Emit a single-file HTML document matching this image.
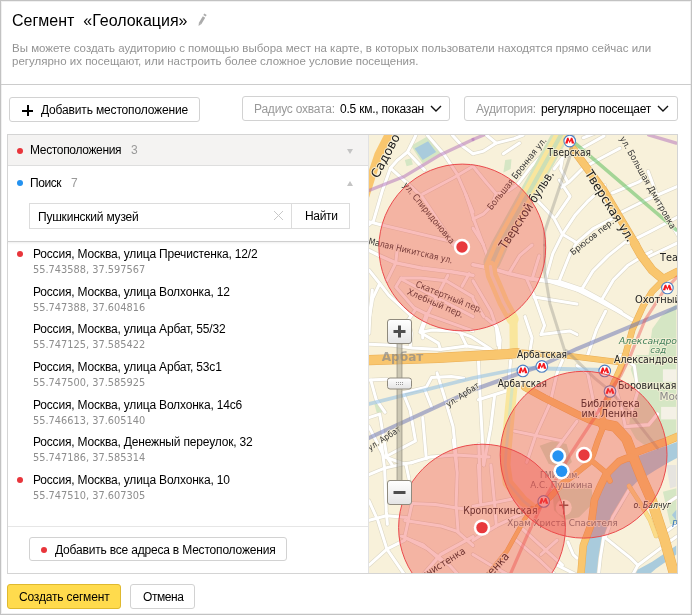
<!DOCTYPE html>
<html lang="ru">
<head>
<meta charset="utf-8">
<title>Сегмент «Геолокация»</title>
<style>
*{box-sizing:border-box;margin:0;padding:0}
html,body{width:692px;height:615px;overflow:hidden;background:#fff}
body{font-family:"Liberation Sans",Arial,sans-serif;font-size:12px;color:#000;position:relative}
.frame{position:absolute;left:0;top:0;width:692px;height:615px;border:1px solid #c2c2c2;box-shadow:inset 0 0 0 1px rgba(0,0,0,.06)}
.t{position:absolute;white-space:pre;line-height:14px;height:14px;will-change:transform}
.g{color:#999}
.title{left:12px;top:11px;font-size:16px;line-height:20px;height:20px}
.pencil{position:absolute;left:196px;top:12px}
.desc{position:absolute;left:12px;top:42px;width:670px;font-size:11.5px;line-height:13px;color:#939393;white-space:pre;will-change:transform}
.hr{position:absolute;left:1px;right:1px;top:84px;height:1px;background:#ccc}
.btn{position:absolute;height:25px;border:1px solid #d2d2d2;border-radius:3px;background:#fff}
.b1{left:9px;top:97px;width:191px}
.plus{position:absolute;left:12px;top:7px;width:11px;height:11px}
.plus:before{content:"";position:absolute;left:0;top:4.5px;width:11px;height:2px;background:#000}
.plus:after{content:"";position:absolute;left:4.5px;top:0;width:2px;height:11px;background:#000}
.b2{left:242px;top:96px;width:208px}
.b3{left:464px;top:96px;width:214px}
.chev{position:absolute}
.panel{position:absolute;left:7px;top:134px;width:671px;height:440px;border:1px solid #d4d4d4;background:#fff}
.hdr{position:absolute;left:8px;top:135px;width:360px;height:31px;background:#f4f3f2;border-bottom:1px solid #dedede}
.vline{position:absolute;left:368px;top:135px;width:1px;height:438px;background:#e2e2e2}
.dot{position:absolute;width:6px;height:6px;border-radius:50%;background:#e8353b}
.dot.blue{background:#2492f0}
.tri{position:absolute;width:0;height:0;border-left:3px solid transparent;border-right:3px solid transparent}
.inp{position:absolute;left:29px;top:203px;width:263px;height:26px;border:1px solid #dcdcdc}
.find{position:absolute;left:291px;top:203px;width:59px;height:26px;border:1px solid #dcdcdc;background:#fff}
.x{position:absolute;left:273px;top:210px}
.sep{position:absolute;left:8px;top:241px;width:360px;height:1px;background:#cfcfcf;box-shadow:0 1px 2px rgba(0,0,0,.10)}
.c{font-family:"DejaVu Sans","Liberation Sans",sans-serif;font-size:9.8px;color:#8d8d8d}
.sep2{position:absolute;left:8px;top:526px;width:360px;height:1px;background:#e6e6e6}
.addall{left:29px;top:537px;width:258px;height:24px}
.map{position:absolute;left:369px;top:135px;width:308px;height:438px;overflow:hidden;background:#f7f0d8;will-change:transform}
.ok{left:7px;top:584px;width:114px;background:#ffdb4d;border-color:#dfb92f}
.cancel{left:130px;top:584px;width:65px}
#b1t{letter-spacing:-0.158px}
#b2g{letter-spacing:-0.214px}
#b2t{letter-spacing:-0.222px}
#b3g{letter-spacing:-0.267px}
#b3t{letter-spacing:-0.247px}
#h1{letter-spacing:-0.336px}
#h2{letter-spacing:-0.453px}
#inpt{letter-spacing:-0.216px}
#findt{letter-spacing:-0.35px}
#addt{letter-spacing:-0.189px}
#okt{letter-spacing:-0.17px}
#cat{letter-spacing:-0.427px}
.a{letter-spacing:-0.178px}
</style>
</head>
<body>
<div class="frame"></div>
<div class="t title" id="title">Сегмент  «Геолокация»</div>
<svg class="pencil" width="12" height="16" viewBox="0 0 12 16"><path d="M8.0 5.0 L4.1 11.4" stroke="#ababab" stroke-width="2.8" fill="none"/><path d="M9.5 2.2 L8.5 3.8" stroke="#ababab" stroke-width="2.8" fill="none"/><path d="M2.9 10.7 L5.3 12.1 L2.6 14 Z" fill="#ababab"/></svg>
<div class="desc"><span id="d1">Вы можете создать аудиторию с помощью выбора мест на карте, в которых пользователи находятся прямо сейчас или</span>
<span id="d2">регулярно их посещают, или настроить более сложное условие посещения.</span></div>
<div class="hr"></div>

<div class="btn b1"><span class="plus"></span></div>
<div class="t" id="b1t" style="left:41px;top:103px">Добавить местоположение</div>
<div class="btn b2"></div>
<div class="t g" id="b2g" style="left:253.5px;top:102px">Радиус охвата:</div>
<div class="t" id="b2t" style="left:340px;top:102px">0.5 км., показан</div>
<svg class="chev" style="left:430px;top:105px" width="12" height="8" viewBox="0 0 12 8"><path d="M1 1 L6 6 L11 1" fill="none" stroke="#111" stroke-width="1.4"/></svg>
<div class="btn b3"></div>
<div class="t g" id="b3g" style="left:476px;top:102px">Аудитория:</div>
<div class="t" id="b3t" style="left:541px;top:102px">регулярно посещает</div>
<svg class="chev" style="left:657px;top:105px" width="12" height="8" viewBox="0 0 12 8"><path d="M1 1 L6 6 L11 1" fill="none" stroke="#111" stroke-width="1.4"/></svg>

<div class="panel"></div>
<div class="hdr"></div>
<span class="dot" style="left:17px;top:148px"></span>
<div class="t" id="h1" style="left:30px;top:143px">Местоположения</div>
<div class="t g" id="h1c" style="left:131px;top:143px">3</div>
<span class="tri" style="left:347px;top:149px;border-top:5px solid #c4c4c4"></span>
<span class="dot blue" style="left:17px;top:180px"></span>
<div class="t" id="h2" style="left:30px;top:176px">Поиск</div>
<div class="t g" id="h2c" style="left:70.5px;top:176px">7</div>
<span class="tri" style="left:347px;top:181px;border-bottom:5px solid #c4c4c4"></span>
<div class="inp"></div>
<div class="t" id="inpt" style="left:37.5px;top:210px">Пушкинский музей</div>
<svg class="x" width="11" height="11" viewBox="0 0 11 11"><path d="M1 1 L10 10 M10 1 L1 10" stroke="#c8c8c8" stroke-width="1" fill="none"/></svg>
<div class="find"></div>
<div class="t" id="findt" style="left:304.5px;top:209px">Найти</div>
<div class="sep"></div>
<div class="t a" id="a0" style="left:33px;top:247px">Россия, Москва, улица Пречистенка, 12/2</div>
<div class="t c" id="c0" style="left:33px;top:263px">55.743588, 37.597567</div>
<span class="dot" style="left:17px;top:251px"></span>
<div class="t a" id="a1" style="left:33px;top:285px">Россия, Москва, улица Волхонка, 12</div>
<div class="t c" id="c1" style="left:33px;top:301px">55.747388, 37.604816</div>
<div class="t a" id="a2" style="left:33px;top:322px">Россия, Москва, улица Арбат, 55/32</div>
<div class="t c" id="c2" style="left:33px;top:338px">55.747125, 37.585422</div>
<div class="t a" id="a3" style="left:33px;top:360px">Россия, Москва, улица Арбат, 53с1</div>
<div class="t c" id="c3" style="left:33px;top:376px">55.747500, 37.585925</div>
<div class="t a" id="a4" style="left:33px;top:398px">Россия, Москва, улица Волхонка, 14с6</div>
<div class="t c" id="c4" style="left:33px;top:414px">55.746613, 37.605140</div>
<div class="t a" id="a5" style="left:33px;top:435px">Россия, Москва, Денежный переулок, 32</div>
<div class="t c" id="c5" style="left:33px;top:451px">55.747186, 37.585314</div>
<div class="t a" id="a6" style="left:33px;top:473px">Россия, Москва, улица Волхонка, 10</div>
<div class="t c" id="c6" style="left:33px;top:489px">55.747510, 37.607305</div>
<span class="dot" style="left:17px;top:477px"></span>

<div class="sep2"></div>
<div class="btn addall"></div>
<span class="dot" style="left:41px;top:547px"></span>
<div class="t" id="addt" style="left:54.5px;top:543px">Добавить все адреса в Местоположения</div>
<div class="vline"></div>
<div class="map">
<!--MAP-->
<svg width="308" height="438" viewBox="369 135 308 438" style="position:absolute;left:0;top:0;display:block">
<rect x="369" y="135" width="308" height="438" fill="#f8f1da"/>
<path d="M411.1 145.7 L428.1 135.9 L440.6 152.9 L422.7 163.6 Z" fill="#d5e6c4" />
<path d="M414.6 148.4 L428.1 141.3 L436.1 152.0 L422.7 160.1 Z" fill="#a9cbdc" />
<path d="M404.8 160.1 L411.1 158.3 L412.9 164.5 L406.6 166.3 Z" fill="#d5e6c4" />
<path d="M505.2 160.1 L511.5 159.2 L510.6 169.0 L503.4 172.6 Z" fill="#d5e6c4" />
<path d="M676.3 304.1 L661.1 316.6 L652.2 329.1 L648.6 355.1 L676.3 355.1 Z" fill="#d5e6c4" />
<path d="M636.1 355.0 L676.3 355.0 L676.3 439.1 L648.6 448.1 L636.1 439.1 L628.9 426.6 L630.7 414.1 L637.9 390.8 L630.7 369.3 Z" fill="#d5e6c4" />
<path d="M539.7 445.8 L552.2 441.3 L566.5 444 L571.9 461.9 L564.7 469 L548.6 463.7 Z" fill="#d2dfbc"/>
<path d="M552.2 488.7 L573.7 481.6 L591.6 488.7 L593.3 503 L579 517.3 L564.7 520 L554 510.2 Z" fill="#d2dfbc"/>
<path d="M662.9 369.3 L676.3 369.3 L676.3 381.8 L662.9 381.8 Z" fill="#f4f1e6" />
<path d="M661.1 406.9 L676.3 406.9 L676.3 419.4 L661.1 419.4 Z" fill="#f4f1e6" />
<path d="M662.9 491.8 L676.3 488.3 L676.3 524.1 L670.1 524.1 Z" fill="#d5e6c4" />
<path d="M666.5 465.0 L676.3 465.0 L676.3 486.5 L670.1 488.3 Z" fill="#e6e4df" />
<path d="M374.4 404.2 L379.7 402.4 L382.4 412.3 L377.1 414.1 Z" fill="#d5e6c4" />
<path d="M636 457 L651.5 451 L666 446 L677 442 L677 458 L667.6 463 L655 470.5 L644 477.5 Z" fill="#a9cbdc"/>
<path d="M633 458 L640 473 L638.3 480.2 L630.7 488.3 L621.7 506.2 L611 524 L603.8 536.6 L602 554.5 L600.3 575 L584 575 L586.5 545.5 L594.5 524 L597.5 500 L603 487 L609 475 L621 464 L628 461 Z" fill="#a9cbdc"/>
<path d="M636.1 570.6 L652.2 561.7 L676.3 545.5 L676.3 554.5 L655.8 568.8 L648.6 575.1 L636.1 575.1 Z" fill="#a9cbdc" />
<path d="M676.3 509.7 L671.9 515.1 L676.3 520.5 Z" fill="#a9cbdc" />
<path d="M369.0 224.5 L373.5 220.9 L382.4 190.5 L390.5 168.1 L397.6 160.1 L407.5 152.0 L412.9 141.3 L415.9 135.0" fill="none" stroke="#ddd8c6" stroke-width="4.2" stroke-linejoin="round" stroke-linecap="round" />
<path d="M390.5 168.1 L407.5 183.3 L422.7 197.6 L437.0 219.1 L447.8 235.2 L453.1 245.1" fill="none" stroke="#ddd8c6" stroke-width="4.2" stroke-linejoin="round" stroke-linecap="round" />
<path d="M407.5 152.0 L424.5 169.9" fill="none" stroke="#ddd8c6" stroke-width="4.2" stroke-linejoin="round" stroke-linecap="round" />
<path d="M427.2 135.0 L444.2 154.7 L456.7 173.5 L465.7 194.1 L473.0 212.0" fill="none" stroke="#ddd8c6" stroke-width="4.2" stroke-linejoin="round" stroke-linecap="round" />
<path d="M452.2 135.0 L462.1 145.7 L473.0 153.8" fill="none" stroke="#ddd8c6" stroke-width="4.2" stroke-linejoin="round" stroke-linecap="round" />
<path d="M422.7 194.1 L453.1 178.0 L473.0 166.3" fill="none" stroke="#ddd8c6" stroke-width="4.2" stroke-linejoin="round" stroke-linecap="round" />
<path d="M369.0 221.8 L379.7 224.5 L413.7 232.5 L447.8 240.6 L462.1 245.1" fill="none" stroke="#ddd8c6" stroke-width="4.2" stroke-linejoin="round" stroke-linecap="round" />
<path d="M473.0 153.8 L483.7 151.1 L496.3 143.1 L486.4 135.0" fill="none" stroke="#ddd8c6" stroke-width="4.2" stroke-linejoin="round" stroke-linecap="round" />
<path d="M496.3 143.1 L514.2 138.6 L523.1 135.0" fill="none" stroke="#ddd8c6" stroke-width="4.2" stroke-linejoin="round" stroke-linecap="round" />
<path d="M503.4 153.8 L519.5 143.1" fill="none" stroke="#ddd8c6" stroke-width="4.2" stroke-linejoin="round" stroke-linecap="round" />
<path d="M473.0 166.3 L485.5 181.5 L496.3 194.1" fill="none" stroke="#ddd8c6" stroke-width="4.2" stroke-linejoin="round" stroke-linecap="round" />
<path d="M473.0 219.1 L483.7 213.8 L490.9 206.6 L496.3 194.1 L508.8 190.5 L517.7 184.2 L532.1 165.4 L544.6 152.9" fill="none" stroke="#ddd8c6" stroke-width="4.2" stroke-linejoin="round" stroke-linecap="round" />
<path d="M473.0 228.1 L483.7 245.1" fill="none" stroke="#ddd8c6" stroke-width="4.2" stroke-linejoin="round" stroke-linecap="round" />
<path d="M577.0 289.7 L598.5 300.5 L618.2 311.2 L636.1 322.0" fill="none" stroke="#ddd8c6" stroke-width="4.8" stroke-linejoin="round" stroke-linecap="round" />
<path d="M605.6 311.2 L596.7 329.1 L587.7 355.1" fill="none" stroke="#ddd8c6" stroke-width="4.2" stroke-linejoin="round" stroke-linecap="round" />
<path d="M473.0 264.7 L490.9 268.3 L508.8 273.6 L532.1 279.0 L548.2 280.8 L577.0 289.7" fill="none" stroke="#ddd8c6" stroke-width="4.8" stroke-linejoin="round" stroke-linecap="round" />
<path d="M508.8 273.6 L519.5 255.7 L532.1 245.0" fill="none" stroke="#ddd8c6" stroke-width="4.2" stroke-linejoin="round" stroke-linecap="round" />
<path d="M532.1 279.0 L539.2 255.7" fill="none" stroke="#ddd8c6" stroke-width="4.2" stroke-linejoin="round" stroke-linecap="round" />
<path d="M526.7 279.0 L533.9 295.1 L544.6 325.5 L541.0 334.5" fill="none" stroke="#ddd8c6" stroke-width="4.2" stroke-linejoin="round" stroke-linecap="round" />
<path d="M533.9 296.9 L577.0 304.1" fill="none" stroke="#ddd8c6" stroke-width="4.2" stroke-linejoin="round" stroke-linecap="round" />
<path d="M541.0 334.5 L569.7 330.9 L577.0 334.5" fill="none" stroke="#ddd8c6" stroke-width="4.2" stroke-linejoin="round" stroke-linecap="round" />
<path d="M524.9 316.6 L532.1 338.1 L530.3 348.8" fill="none" stroke="#ddd8c6" stroke-width="4.2" stroke-linejoin="round" stroke-linecap="round" />
<path d="M473.0 280.8 L490.9 311.2 L496.3 327.3 L498.1 345.2" fill="none" stroke="#ddd8c6" stroke-width="4.2" stroke-linejoin="round" stroke-linecap="round" />
<path d="M473.0 298.7 L483.7 316.6" fill="none" stroke="#ddd8c6" stroke-width="4.2" stroke-linejoin="round" stroke-linecap="round" />
<path d="M369.0 250.4 L379.7 255.7 L395.8 262.9 L422.7 268.3 L451.3 271.8 L473.0 275.4" fill="none" stroke="#ddd8c6" stroke-width="4.6" stroke-linejoin="round" stroke-linecap="round" />
<path d="M397.6 245.0 L395.8 262.9 L386.9 280.8" fill="none" stroke="#ddd8c6" stroke-width="4.2" stroke-linejoin="round" stroke-linecap="round" />
<path d="M401.2 278.1 L420.9 278.1 L446.0 280.8 L473.0 296.9" fill="none" stroke="#ddd8c6" stroke-width="4.2" stroke-linejoin="round" stroke-linecap="round" />
<path d="M401.2 278.1 L395.8 287.1 L413.7 307.6 L428.1 314.8 L473.0 330.9" fill="none" stroke="#ddd8c6" stroke-width="4.2" stroke-linejoin="round" stroke-linecap="round" />
<path d="M401.2 279.0 L428.1 293.3 L473.0 316.6" fill="none" stroke="#ddd8c6" stroke-width="4.2" stroke-linejoin="round" stroke-linecap="round" />
<path d="M447.8 275.4 L428.1 313.0 L422.7 329.1 L422.7 338.1" fill="none" stroke="#ddd8c6" stroke-width="4.2" stroke-linejoin="round" stroke-linecap="round" />
<path d="M369.0 270.1 L379.7 283.5 L388.7 295.1 L410.2 314.8" fill="none" stroke="#ddd8c6" stroke-width="4.2" stroke-linejoin="round" stroke-linecap="round" />
<path d="M379.7 283.5 L372.6 298.7 L369.0 320.2" fill="none" stroke="#ddd8c6" stroke-width="4.2" stroke-linejoin="round" stroke-linecap="round" />
<path d="M469.2 273.6 L462.1 286.2" fill="none" stroke="#ddd8c6" stroke-width="4.2" stroke-linejoin="round" stroke-linecap="round" />
<path d="M369.0 380.1 L386.9 379.2" fill="none" stroke="#ddd8c6" stroke-width="4.2" stroke-linejoin="round" stroke-linecap="round" />
<path d="M370.8 380.1 L376.2 399.7 L385.1 412.3" fill="none" stroke="#ddd8c6" stroke-width="4.2" stroke-linejoin="round" stroke-linecap="round" />
<path d="M403.0 392.6 L426.3 387.2 L431.6 377.4 L451.3 376.5 L463.9 378.3" fill="none" stroke="#ddd8c6" stroke-width="4.2" stroke-linejoin="round" stroke-linecap="round" />
<path d="M403.0 392.6 L410.2 410.5 L415.5 440.9 L385.1 457.0" fill="none" stroke="#ddd8c6" stroke-width="4.2" stroke-linejoin="round" stroke-linecap="round" />
<path d="M369.0 417.6 L379.7 414.1 L386.9 457.0 L392.3 465.1" fill="none" stroke="#ddd8c6" stroke-width="4.2" stroke-linejoin="round" stroke-linecap="round" />
<path d="M424.5 389.0 L431.6 406.9" fill="none" stroke="#ddd8c6" stroke-width="4.2" stroke-linejoin="round" stroke-linecap="round" />
<path d="M422.7 417.6 L426.3 458.8" fill="none" stroke="#ddd8c6" stroke-width="4.2" stroke-linejoin="round" stroke-linecap="round" />
<path d="M437.0 372.9 L444.2 396.2 L453.1 426.6 L454.9 444.5 L456.7 465.1" fill="none" stroke="#ddd8c6" stroke-width="4.2" stroke-linejoin="round" stroke-linecap="round" />
<path d="M385.1 457.0 L404.8 464.2" fill="none" stroke="#ddd8c6" stroke-width="4.2" stroke-linejoin="round" stroke-linecap="round" />
<path d="M369.0 426.6 L383.3 455.2" fill="none" stroke="#ddd8c6" stroke-width="4.2" stroke-linejoin="round" stroke-linecap="round" />
<path d="M478.4 360.4 L480.2 399.7 L481.9 430.2 L483.7 465.1" fill="none" stroke="#ddd8c6" stroke-width="4.2" stroke-linejoin="round" stroke-linecap="round" />
<path d="M494.5 396.2 L490.9 426.6 L483.7 465.1" fill="none" stroke="#ddd8c6" stroke-width="4.2" stroke-linejoin="round" stroke-linecap="round" />
<path d="M478.4 399.7 L507.0 390.8" fill="none" stroke="#ddd8c6" stroke-width="4.2" stroke-linejoin="round" stroke-linecap="round" />
<path d="M510.6 360.4 L508.8 381.8" fill="none" stroke="#ddd8c6" stroke-width="4.2" stroke-linejoin="round" stroke-linecap="round" />
<path d="M562.5 360.4 L557.1 372.9 L550.0 403.3 L535.6 435.5 L526.7 462.4" fill="none" stroke="#ddd8c6" stroke-width="4.2" stroke-linejoin="round" stroke-linecap="round" />
<path d="M514.2 431.1 L535.6 435.5 L562.5 440.9" fill="none" stroke="#ddd8c6" stroke-width="4.2" stroke-linejoin="round" stroke-linecap="round" />
<path d="M577.0 421.2 L562.5 440.9 L557.1 448.1" fill="none" stroke="#ddd8c6" stroke-width="4.2" stroke-linejoin="round" stroke-linecap="round" />
<path d="M369.0 500.8 L377.9 520.5 L386.9 549.1 L369.0 565.2" fill="none" stroke="#ddd8c6" stroke-width="4.2" stroke-linejoin="round" stroke-linecap="round" />
<path d="M386.9 549.1 L404.8 540.2" fill="none" stroke="#ddd8c6" stroke-width="4.2" stroke-linejoin="round" stroke-linecap="round" />
<path d="M386.9 549.1 L404.8 575.1" fill="none" stroke="#ddd8c6" stroke-width="4.2" stroke-linejoin="round" stroke-linecap="round" />
<path d="M412.0 503.5 L435.2 504.4 L456.7 508.0 L473.0 509.7" fill="none" stroke="#ddd8c6" stroke-width="4.2" stroke-linejoin="round" stroke-linecap="round" />
<path d="M404.8 520.5 L440.6 525.9 L456.7 531.2 L473.0 545.5" fill="none" stroke="#ddd8c6" stroke-width="4.2" stroke-linejoin="round" stroke-linecap="round" />
<path d="M412.0 503.5 L404.8 536.6" fill="none" stroke="#ddd8c6" stroke-width="4.2" stroke-linejoin="round" stroke-linecap="round" />
<path d="M403.0 536.6 L428.1 549.1 L449.5 565.2 L458.5 575.1" fill="none" stroke="#ddd8c6" stroke-width="4.2" stroke-linejoin="round" stroke-linecap="round" />
<path d="M473.0 536.6 L440.6 554.5 L422.7 575.1" fill="none" stroke="#ddd8c6" stroke-width="4.4" stroke-linejoin="round" stroke-linecap="round" />
<path d="M545.2 280.8 L552.8 253.7 L562.5 234.2 L575.5 214.7 L587.4 201.7 L599.4 190.8 L604.8 185.4" fill="none" stroke="#ddd8c6" stroke-width="4.2" stroke-linejoin="round" stroke-linecap="round" />
<path d="M559.3 280.8 L570.1 253.7 L576.6 242.9 L592.9 228.8 L615.6 216.9" fill="none" stroke="#ddd8c6" stroke-width="4.2" stroke-linejoin="round" stroke-linecap="round" />
<path d="M580.9 290.6 L592.9 271.0 L608.0 255.9 L625.4 241.8" fill="none" stroke="#ddd8c6" stroke-width="4.2" stroke-linejoin="round" stroke-linecap="round" />
<path d="M601.5 300.1 L613.5 279.7 L627.6 265.6 L644.9 254.8 L651.4 251.5" fill="none" stroke="#ddd8c6" stroke-width="4.2" stroke-linejoin="round" stroke-linecap="round" />
<path d="M534.3 197.3 L553.8 217.9 L562.5 234.2 L573.4 240.7 L576.6 242.9" fill="none" stroke="#ddd8c6" stroke-width="4.2" stroke-linejoin="round" stroke-linecap="round" />
<path d="M559.3 180.0 L570.1 196.3 L556.0 216.9" fill="none" stroke="#ddd8c6" stroke-width="4.2" stroke-linejoin="round" stroke-linecap="round" />
<path d="M627.6 242.9 L651.4 230.9 L680.0 215.8" fill="none" stroke="#ddd8c6" stroke-width="4.2" stroke-linejoin="round" stroke-linecap="round" />
<path d="M648.1 257.0 L680.0 241.8" fill="none" stroke="#ddd8c6" stroke-width="4.2" stroke-linejoin="round" stroke-linecap="round" />
<path d="M621.0 212.5 L647.1 199.5 L680.0 185.4" fill="none" stroke="#ddd8c6" stroke-width="4.2" stroke-linejoin="round" stroke-linecap="round" />
<path d="M612.4 193.0 L638.4 182.2 L644.9 177.8" fill="none" stroke="#ddd8c6" stroke-width="4.2" stroke-linejoin="round" stroke-linecap="round" />
<path d="M648.1 171.3 L660.1 203.8 L670.9 223.4 L680.0 238.5" fill="none" stroke="#ddd8c6" stroke-width="4.2" stroke-linejoin="round" stroke-linecap="round" />
<path d="M530.0 278.6 L545.2 280.8 L559.3 281.9 L582.0 289.5 L601.5 300.1 L621.0 312.2" fill="none" stroke="#ddd8c6" stroke-width="5.0" stroke-linejoin="round" stroke-linecap="round" />
<path d="M554.1 169.0 L562.5 158.0 L582.0 148.2 L604.1 135.9" fill="none" stroke="#ddd8c6" stroke-width="4.2" stroke-linejoin="round" stroke-linecap="round" />
<path d="M561.2 187.2 L569.0 182.0 L583.3 167.7 L602.8 157.3 L620.0 148.2" fill="none" stroke="#ddd8c6" stroke-width="4.2" stroke-linejoin="round" stroke-linecap="round" />
<path d="M562.5 158.0 L560.6 169.0 L567.7 182.0" fill="none" stroke="#ddd8c6" stroke-width="4.2" stroke-linejoin="round" stroke-linecap="round" />
<path d="M583.3 137.8 L602.8 130.0" fill="none" stroke="#ddd8c6" stroke-width="4.2" stroke-linejoin="round" stroke-linecap="round" />
<path d="M369.0 344.2 L392.8 345.3 L412.4 348.1 L440.5 349.6 L466.6 345.9 L490.4 349.6 L499.1 352.9" fill="none" stroke="#ddd8c6" stroke-width="4.2" stroke-linejoin="round" stroke-linecap="round" />
<path d="M415.6 309.5 L408.0 320.3 L411.3 333.4 L410.2 347.4" fill="none" stroke="#ddd8c6" stroke-width="4.2" stroke-linejoin="round" stroke-linecap="round" />
<path d="M426.4 313.8 L419.9 332.3 L438.4 343.1 L440.5 349.6" fill="none" stroke="#ddd8c6" stroke-width="4.2" stroke-linejoin="round" stroke-linecap="round" />
<path d="M421.0 332.3 L431.9 330.1 L455.7 331.2 L470.9 336.6 L490.4 349.0" fill="none" stroke="#ddd8c6" stroke-width="4.2" stroke-linejoin="round" stroke-linecap="round" />
<path d="M486.1 318.2 L496.9 326.9 L500.2 339.9 L499.1 352.9" fill="none" stroke="#ddd8c6" stroke-width="4.2" stroke-linejoin="round" stroke-linecap="round" />
<path d="M460.0 332.3 L466.6 345.9" fill="none" stroke="#ddd8c6" stroke-width="4.2" stroke-linejoin="round" stroke-linecap="round" />
<path d="M372.3 290.0 L370.1 311.7 L369.0 333.4" fill="none" stroke="#ddd8c6" stroke-width="4.2" stroke-linejoin="round" stroke-linecap="round" />
<path d="M411.2 462.7 L430.6 456.9 L455.5 455.1 L489.0 456.9" fill="none" stroke="#ddd8c6" stroke-width="4.2" stroke-linejoin="round" stroke-linecap="round" />
<path d="M453.3 440.0 L457.2 472.4 L456.1 504.9 L458.1 531.9" fill="none" stroke="#ddd8c6" stroke-width="4.2" stroke-linejoin="round" stroke-linecap="round" />
<path d="M478.8 444.3 L480.6 502.7" fill="none" stroke="#ddd8c6" stroke-width="4.2" stroke-linejoin="round" stroke-linecap="round" />
<path d="M401.4 536.2 L423.1 544.9 L441.4 561.1" fill="none" stroke="#ddd8c6" stroke-width="4.2" stroke-linejoin="round" stroke-linecap="round" />
<path d="M380.9 440.0 L384.6 468.1 L386.3 511.4 L387.4 524.3" fill="none" stroke="#ddd8c6" stroke-width="4.2" stroke-linejoin="round" stroke-linecap="round" />
<path d="M369.0 474.6 L384.6 468.1 L405.8 463.4 L412.2 462.7" fill="none" stroke="#ddd8c6" stroke-width="4.2" stroke-linejoin="round" stroke-linecap="round" />
<path d="M405.8 463.8 L409.0 478.9" fill="none" stroke="#ddd8c6" stroke-width="4.2" stroke-linejoin="round" stroke-linecap="round" />
<path d="M369.0 520.4 L386.3 515.7 L406.8 517.4" fill="none" stroke="#ddd8c6" stroke-width="4.2" stroke-linejoin="round" stroke-linecap="round" />
<path d="M465.6 194.0 L470.0 207.0 L473.8 219.5 L480.0 236.0 L487.0 255.0 L490.0 264.0" fill="none" stroke="#ddd8c6" stroke-width="4.2" stroke-linejoin="round" stroke-linecap="round" />
<path d="M473.0 540.2 L496.3 525.9 L526.7 511.5 L533.9 507.1" fill="none" stroke="#ddd8c6" stroke-width="4.4" stroke-linejoin="round" stroke-linecap="round" />
<path d="M473.0 506.2 L494.5 502.6 L512.4 499.0" fill="none" stroke="#ddd8c6" stroke-width="4.2" stroke-linejoin="round" stroke-linecap="round" />
<path d="M478.4 465.0 L480.2 500.8" fill="none" stroke="#ddd8c6" stroke-width="4.2" stroke-linejoin="round" stroke-linecap="round" />
<path d="M490.9 465.0 L494.5 502.6 L496.3 525.9" fill="none" stroke="#ddd8c6" stroke-width="4.2" stroke-linejoin="round" stroke-linecap="round" />
<path d="M523.1 529.4 L544.6 549.1 L562.5 565.2" fill="none" stroke="#ddd8c6" stroke-width="4.2" stroke-linejoin="round" stroke-linecap="round" />
<path d="M516.0 540.2 L539.2 559.9 L555.3 575.1" fill="none" stroke="#ddd8c6" stroke-width="4.2" stroke-linejoin="round" stroke-linecap="round" />
<path d="M541.0 554.5 L557.1 540.2" fill="none" stroke="#ddd8c6" stroke-width="4.2" stroke-linejoin="round" stroke-linecap="round" />
<path d="M473.0 554.5 L490.9 565.2 L508.8 575.1" fill="none" stroke="#ddd8c6" stroke-width="4.2" stroke-linejoin="round" stroke-linecap="round" />
<path d="M567.9 542.0 L573.2 554.5 L577.0 558.1" fill="none" stroke="#ddd8c6" stroke-width="4.2" stroke-linejoin="round" stroke-linecap="round" />
<path d="M557.1 565.2 L577.0 575.1" fill="none" stroke="#ddd8c6" stroke-width="4.2" stroke-linejoin="round" stroke-linecap="round" />
<path d="M628.9 490.1 L612.8 516.9 L605.6 536.6" fill="none" stroke="#ddd8c6" stroke-width="4.2" stroke-linejoin="round" stroke-linecap="round" />
<path d="M603.8 536.6 L630.7 558.1 L637.9 565.2 L632.5 575.1" fill="none" stroke="#ddd8c6" stroke-width="4.2" stroke-linejoin="round" stroke-linecap="round" />
<path d="M603.8 536.6 L600.3 558.1 L598.5 575.1" fill="none" stroke="#ddd8c6" stroke-width="4.2" stroke-linejoin="round" stroke-linecap="round" />
<path d="M637.9 565.2 L659.3 549.1 L676.3 536.6" fill="none" stroke="#ddd8c6" stroke-width="4.2" stroke-linejoin="round" stroke-linecap="round" />
<path d="M659.3 536.6 L655.8 524.1" fill="none" stroke="#ddd8c6" stroke-width="4.2" stroke-linejoin="round" stroke-linecap="round" />
<path d="M676.3 497.2 L662.9 506.2" fill="none" stroke="#ddd8c6" stroke-width="4.2" stroke-linejoin="round" stroke-linecap="round" />
<path d="M676.3 524.1 L666.5 531.2" fill="none" stroke="#ddd8c6" stroke-width="4.2" stroke-linejoin="round" stroke-linecap="round" />
<path d="M587.7 372.9 L593.1 399.7 L598.5 414.1" fill="none" stroke="#ddd8c6" stroke-width="4.2" stroke-linejoin="round" stroke-linecap="round" />
<path d="M612.8 378.3 L621.7 408.7 L625.3 426.6" fill="none" stroke="#ddd8c6" stroke-width="4.2" stroke-linejoin="round" stroke-linecap="round" />
<path d="M625.3 426.6 L648.6 424.8 L657.5 414.1" fill="none" stroke="#ddd8c6" stroke-width="4.6" stroke-linejoin="round" stroke-linecap="round" />
<path d="M620.0 355.0 L634.3 365.7 L637.9 390.8 L630.7 414.1" fill="none" stroke="#ddd8c6" stroke-width="4.2" stroke-linejoin="round" stroke-linecap="round" />
<path d="M577.0 365.7 L587.7 372.9" fill="none" stroke="#ddd8c6" stroke-width="4.2" stroke-linejoin="round" stroke-linecap="round" />
<path d="M369.0 224.5 L373.5 220.9 L382.4 190.5 L390.5 168.1 L397.6 160.1 L407.5 152.0 L412.9 141.3 L415.9 135.0" fill="none" stroke="#ffffff" stroke-width="3.0" stroke-linejoin="round" stroke-linecap="round" />
<path d="M390.5 168.1 L407.5 183.3 L422.7 197.6 L437.0 219.1 L447.8 235.2 L453.1 245.1" fill="none" stroke="#ffffff" stroke-width="3.0" stroke-linejoin="round" stroke-linecap="round" />
<path d="M407.5 152.0 L424.5 169.9" fill="none" stroke="#ffffff" stroke-width="3.0" stroke-linejoin="round" stroke-linecap="round" />
<path d="M427.2 135.0 L444.2 154.7 L456.7 173.5 L465.7 194.1 L473.0 212.0" fill="none" stroke="#ffffff" stroke-width="3.0" stroke-linejoin="round" stroke-linecap="round" />
<path d="M452.2 135.0 L462.1 145.7 L473.0 153.8" fill="none" stroke="#ffffff" stroke-width="3.0" stroke-linejoin="round" stroke-linecap="round" />
<path d="M422.7 194.1 L453.1 178.0 L473.0 166.3" fill="none" stroke="#ffffff" stroke-width="3.0" stroke-linejoin="round" stroke-linecap="round" />
<path d="M369.0 221.8 L379.7 224.5 L413.7 232.5 L447.8 240.6 L462.1 245.1" fill="none" stroke="#ffffff" stroke-width="3.0" stroke-linejoin="round" stroke-linecap="round" />
<path d="M473.0 153.8 L483.7 151.1 L496.3 143.1 L486.4 135.0" fill="none" stroke="#ffffff" stroke-width="3.0" stroke-linejoin="round" stroke-linecap="round" />
<path d="M496.3 143.1 L514.2 138.6 L523.1 135.0" fill="none" stroke="#ffffff" stroke-width="3.0" stroke-linejoin="round" stroke-linecap="round" />
<path d="M503.4 153.8 L519.5 143.1" fill="none" stroke="#ffffff" stroke-width="3.0" stroke-linejoin="round" stroke-linecap="round" />
<path d="M473.0 166.3 L485.5 181.5 L496.3 194.1" fill="none" stroke="#ffffff" stroke-width="3.0" stroke-linejoin="round" stroke-linecap="round" />
<path d="M473.0 219.1 L483.7 213.8 L490.9 206.6 L496.3 194.1 L508.8 190.5 L517.7 184.2 L532.1 165.4 L544.6 152.9" fill="none" stroke="#ffffff" stroke-width="3.0" stroke-linejoin="round" stroke-linecap="round" />
<path d="M473.0 228.1 L483.7 245.1" fill="none" stroke="#ffffff" stroke-width="3.0" stroke-linejoin="round" stroke-linecap="round" />
<path d="M577.0 289.7 L598.5 300.5 L618.2 311.2 L636.1 322.0" fill="none" stroke="#ffffff" stroke-width="3.6" stroke-linejoin="round" stroke-linecap="round" />
<path d="M605.6 311.2 L596.7 329.1 L587.7 355.1" fill="none" stroke="#ffffff" stroke-width="3.0" stroke-linejoin="round" stroke-linecap="round" />
<path d="M473.0 264.7 L490.9 268.3 L508.8 273.6 L532.1 279.0 L548.2 280.8 L577.0 289.7" fill="none" stroke="#ffffff" stroke-width="3.6" stroke-linejoin="round" stroke-linecap="round" />
<path d="M508.8 273.6 L519.5 255.7 L532.1 245.0" fill="none" stroke="#ffffff" stroke-width="3.0" stroke-linejoin="round" stroke-linecap="round" />
<path d="M532.1 279.0 L539.2 255.7" fill="none" stroke="#ffffff" stroke-width="3.0" stroke-linejoin="round" stroke-linecap="round" />
<path d="M526.7 279.0 L533.9 295.1 L544.6 325.5 L541.0 334.5" fill="none" stroke="#ffffff" stroke-width="3.0" stroke-linejoin="round" stroke-linecap="round" />
<path d="M533.9 296.9 L577.0 304.1" fill="none" stroke="#ffffff" stroke-width="3.0" stroke-linejoin="round" stroke-linecap="round" />
<path d="M541.0 334.5 L569.7 330.9 L577.0 334.5" fill="none" stroke="#ffffff" stroke-width="3.0" stroke-linejoin="round" stroke-linecap="round" />
<path d="M524.9 316.6 L532.1 338.1 L530.3 348.8" fill="none" stroke="#ffffff" stroke-width="3.0" stroke-linejoin="round" stroke-linecap="round" />
<path d="M473.0 280.8 L490.9 311.2 L496.3 327.3 L498.1 345.2" fill="none" stroke="#ffffff" stroke-width="3.0" stroke-linejoin="round" stroke-linecap="round" />
<path d="M473.0 298.7 L483.7 316.6" fill="none" stroke="#ffffff" stroke-width="3.0" stroke-linejoin="round" stroke-linecap="round" />
<path d="M369.0 250.4 L379.7 255.7 L395.8 262.9 L422.7 268.3 L451.3 271.8 L473.0 275.4" fill="none" stroke="#ffffff" stroke-width="3.4" stroke-linejoin="round" stroke-linecap="round" />
<path d="M397.6 245.0 L395.8 262.9 L386.9 280.8" fill="none" stroke="#ffffff" stroke-width="3.0" stroke-linejoin="round" stroke-linecap="round" />
<path d="M401.2 278.1 L420.9 278.1 L446.0 280.8 L473.0 296.9" fill="none" stroke="#ffffff" stroke-width="3.0" stroke-linejoin="round" stroke-linecap="round" />
<path d="M401.2 278.1 L395.8 287.1 L413.7 307.6 L428.1 314.8 L473.0 330.9" fill="none" stroke="#ffffff" stroke-width="3.0" stroke-linejoin="round" stroke-linecap="round" />
<path d="M401.2 279.0 L428.1 293.3 L473.0 316.6" fill="none" stroke="#ffffff" stroke-width="3.0" stroke-linejoin="round" stroke-linecap="round" />
<path d="M447.8 275.4 L428.1 313.0 L422.7 329.1 L422.7 338.1" fill="none" stroke="#ffffff" stroke-width="3.0" stroke-linejoin="round" stroke-linecap="round" />
<path d="M369.0 270.1 L379.7 283.5 L388.7 295.1 L410.2 314.8" fill="none" stroke="#ffffff" stroke-width="3.0" stroke-linejoin="round" stroke-linecap="round" />
<path d="M379.7 283.5 L372.6 298.7 L369.0 320.2" fill="none" stroke="#ffffff" stroke-width="3.0" stroke-linejoin="round" stroke-linecap="round" />
<path d="M469.2 273.6 L462.1 286.2" fill="none" stroke="#ffffff" stroke-width="3.0" stroke-linejoin="round" stroke-linecap="round" />
<path d="M369.0 380.1 L386.9 379.2" fill="none" stroke="#ffffff" stroke-width="3.0" stroke-linejoin="round" stroke-linecap="round" />
<path d="M370.8 380.1 L376.2 399.7 L385.1 412.3" fill="none" stroke="#ffffff" stroke-width="3.0" stroke-linejoin="round" stroke-linecap="round" />
<path d="M403.0 392.6 L426.3 387.2 L431.6 377.4 L451.3 376.5 L463.9 378.3" fill="none" stroke="#ffffff" stroke-width="3.0" stroke-linejoin="round" stroke-linecap="round" />
<path d="M403.0 392.6 L410.2 410.5 L415.5 440.9 L385.1 457.0" fill="none" stroke="#ffffff" stroke-width="3.0" stroke-linejoin="round" stroke-linecap="round" />
<path d="M369.0 417.6 L379.7 414.1 L386.9 457.0 L392.3 465.1" fill="none" stroke="#ffffff" stroke-width="3.0" stroke-linejoin="round" stroke-linecap="round" />
<path d="M424.5 389.0 L431.6 406.9" fill="none" stroke="#ffffff" stroke-width="3.0" stroke-linejoin="round" stroke-linecap="round" />
<path d="M422.7 417.6 L426.3 458.8" fill="none" stroke="#ffffff" stroke-width="3.0" stroke-linejoin="round" stroke-linecap="round" />
<path d="M437.0 372.9 L444.2 396.2 L453.1 426.6 L454.9 444.5 L456.7 465.1" fill="none" stroke="#ffffff" stroke-width="3.0" stroke-linejoin="round" stroke-linecap="round" />
<path d="M385.1 457.0 L404.8 464.2" fill="none" stroke="#ffffff" stroke-width="3.0" stroke-linejoin="round" stroke-linecap="round" />
<path d="M369.0 426.6 L383.3 455.2" fill="none" stroke="#ffffff" stroke-width="3.0" stroke-linejoin="round" stroke-linecap="round" />
<path d="M478.4 360.4 L480.2 399.7 L481.9 430.2 L483.7 465.1" fill="none" stroke="#ffffff" stroke-width="3.0" stroke-linejoin="round" stroke-linecap="round" />
<path d="M494.5 396.2 L490.9 426.6 L483.7 465.1" fill="none" stroke="#ffffff" stroke-width="3.0" stroke-linejoin="round" stroke-linecap="round" />
<path d="M478.4 399.7 L507.0 390.8" fill="none" stroke="#ffffff" stroke-width="3.0" stroke-linejoin="round" stroke-linecap="round" />
<path d="M510.6 360.4 L508.8 381.8" fill="none" stroke="#ffffff" stroke-width="3.0" stroke-linejoin="round" stroke-linecap="round" />
<path d="M562.5 360.4 L557.1 372.9 L550.0 403.3 L535.6 435.5 L526.7 462.4" fill="none" stroke="#ffffff" stroke-width="3.0" stroke-linejoin="round" stroke-linecap="round" />
<path d="M514.2 431.1 L535.6 435.5 L562.5 440.9" fill="none" stroke="#ffffff" stroke-width="3.0" stroke-linejoin="round" stroke-linecap="round" />
<path d="M577.0 421.2 L562.5 440.9 L557.1 448.1" fill="none" stroke="#ffffff" stroke-width="3.0" stroke-linejoin="round" stroke-linecap="round" />
<path d="M369.0 500.8 L377.9 520.5 L386.9 549.1 L369.0 565.2" fill="none" stroke="#ffffff" stroke-width="3.0" stroke-linejoin="round" stroke-linecap="round" />
<path d="M386.9 549.1 L404.8 540.2" fill="none" stroke="#ffffff" stroke-width="3.0" stroke-linejoin="round" stroke-linecap="round" />
<path d="M386.9 549.1 L404.8 575.1" fill="none" stroke="#ffffff" stroke-width="3.0" stroke-linejoin="round" stroke-linecap="round" />
<path d="M412.0 503.5 L435.2 504.4 L456.7 508.0 L473.0 509.7" fill="none" stroke="#ffffff" stroke-width="3.0" stroke-linejoin="round" stroke-linecap="round" />
<path d="M404.8 520.5 L440.6 525.9 L456.7 531.2 L473.0 545.5" fill="none" stroke="#ffffff" stroke-width="3.0" stroke-linejoin="round" stroke-linecap="round" />
<path d="M412.0 503.5 L404.8 536.6" fill="none" stroke="#ffffff" stroke-width="3.0" stroke-linejoin="round" stroke-linecap="round" />
<path d="M403.0 536.6 L428.1 549.1 L449.5 565.2 L458.5 575.1" fill="none" stroke="#ffffff" stroke-width="3.0" stroke-linejoin="round" stroke-linecap="round" />
<path d="M473.0 536.6 L440.6 554.5 L422.7 575.1" fill="none" stroke="#ffffff" stroke-width="3.2" stroke-linejoin="round" stroke-linecap="round" />
<path d="M545.2 280.8 L552.8 253.7 L562.5 234.2 L575.5 214.7 L587.4 201.7 L599.4 190.8 L604.8 185.4" fill="none" stroke="#ffffff" stroke-width="3.0" stroke-linejoin="round" stroke-linecap="round" />
<path d="M559.3 280.8 L570.1 253.7 L576.6 242.9 L592.9 228.8 L615.6 216.9" fill="none" stroke="#ffffff" stroke-width="3.0" stroke-linejoin="round" stroke-linecap="round" />
<path d="M580.9 290.6 L592.9 271.0 L608.0 255.9 L625.4 241.8" fill="none" stroke="#ffffff" stroke-width="3.0" stroke-linejoin="round" stroke-linecap="round" />
<path d="M601.5 300.1 L613.5 279.7 L627.6 265.6 L644.9 254.8 L651.4 251.5" fill="none" stroke="#ffffff" stroke-width="3.0" stroke-linejoin="round" stroke-linecap="round" />
<path d="M534.3 197.3 L553.8 217.9 L562.5 234.2 L573.4 240.7 L576.6 242.9" fill="none" stroke="#ffffff" stroke-width="3.0" stroke-linejoin="round" stroke-linecap="round" />
<path d="M559.3 180.0 L570.1 196.3 L556.0 216.9" fill="none" stroke="#ffffff" stroke-width="3.0" stroke-linejoin="round" stroke-linecap="round" />
<path d="M627.6 242.9 L651.4 230.9 L680.0 215.8" fill="none" stroke="#ffffff" stroke-width="3.0" stroke-linejoin="round" stroke-linecap="round" />
<path d="M648.1 257.0 L680.0 241.8" fill="none" stroke="#ffffff" stroke-width="3.0" stroke-linejoin="round" stroke-linecap="round" />
<path d="M621.0 212.5 L647.1 199.5 L680.0 185.4" fill="none" stroke="#ffffff" stroke-width="3.0" stroke-linejoin="round" stroke-linecap="round" />
<path d="M612.4 193.0 L638.4 182.2 L644.9 177.8" fill="none" stroke="#ffffff" stroke-width="3.0" stroke-linejoin="round" stroke-linecap="round" />
<path d="M648.1 171.3 L660.1 203.8 L670.9 223.4 L680.0 238.5" fill="none" stroke="#ffffff" stroke-width="3.0" stroke-linejoin="round" stroke-linecap="round" />
<path d="M530.0 278.6 L545.2 280.8 L559.3 281.9 L582.0 289.5 L601.5 300.1 L621.0 312.2" fill="none" stroke="#ffffff" stroke-width="3.8" stroke-linejoin="round" stroke-linecap="round" />
<path d="M554.1 169.0 L562.5 158.0 L582.0 148.2 L604.1 135.9" fill="none" stroke="#ffffff" stroke-width="3.0" stroke-linejoin="round" stroke-linecap="round" />
<path d="M561.2 187.2 L569.0 182.0 L583.3 167.7 L602.8 157.3 L620.0 148.2" fill="none" stroke="#ffffff" stroke-width="3.0" stroke-linejoin="round" stroke-linecap="round" />
<path d="M562.5 158.0 L560.6 169.0 L567.7 182.0" fill="none" stroke="#ffffff" stroke-width="3.0" stroke-linejoin="round" stroke-linecap="round" />
<path d="M583.3 137.8 L602.8 130.0" fill="none" stroke="#ffffff" stroke-width="3.0" stroke-linejoin="round" stroke-linecap="round" />
<path d="M369.0 344.2 L392.8 345.3 L412.4 348.1 L440.5 349.6 L466.6 345.9 L490.4 349.6 L499.1 352.9" fill="none" stroke="#ffffff" stroke-width="3.0" stroke-linejoin="round" stroke-linecap="round" />
<path d="M415.6 309.5 L408.0 320.3 L411.3 333.4 L410.2 347.4" fill="none" stroke="#ffffff" stroke-width="3.0" stroke-linejoin="round" stroke-linecap="round" />
<path d="M426.4 313.8 L419.9 332.3 L438.4 343.1 L440.5 349.6" fill="none" stroke="#ffffff" stroke-width="3.0" stroke-linejoin="round" stroke-linecap="round" />
<path d="M421.0 332.3 L431.9 330.1 L455.7 331.2 L470.9 336.6 L490.4 349.0" fill="none" stroke="#ffffff" stroke-width="3.0" stroke-linejoin="round" stroke-linecap="round" />
<path d="M486.1 318.2 L496.9 326.9 L500.2 339.9 L499.1 352.9" fill="none" stroke="#ffffff" stroke-width="3.0" stroke-linejoin="round" stroke-linecap="round" />
<path d="M460.0 332.3 L466.6 345.9" fill="none" stroke="#ffffff" stroke-width="3.0" stroke-linejoin="round" stroke-linecap="round" />
<path d="M372.3 290.0 L370.1 311.7 L369.0 333.4" fill="none" stroke="#ffffff" stroke-width="3.0" stroke-linejoin="round" stroke-linecap="round" />
<path d="M411.2 462.7 L430.6 456.9 L455.5 455.1 L489.0 456.9" fill="none" stroke="#ffffff" stroke-width="3.0" stroke-linejoin="round" stroke-linecap="round" />
<path d="M453.3 440.0 L457.2 472.4 L456.1 504.9 L458.1 531.9" fill="none" stroke="#ffffff" stroke-width="3.0" stroke-linejoin="round" stroke-linecap="round" />
<path d="M478.8 444.3 L480.6 502.7" fill="none" stroke="#ffffff" stroke-width="3.0" stroke-linejoin="round" stroke-linecap="round" />
<path d="M401.4 536.2 L423.1 544.9 L441.4 561.1" fill="none" stroke="#ffffff" stroke-width="3.0" stroke-linejoin="round" stroke-linecap="round" />
<path d="M380.9 440.0 L384.6 468.1 L386.3 511.4 L387.4 524.3" fill="none" stroke="#ffffff" stroke-width="3.0" stroke-linejoin="round" stroke-linecap="round" />
<path d="M369.0 474.6 L384.6 468.1 L405.8 463.4 L412.2 462.7" fill="none" stroke="#ffffff" stroke-width="3.0" stroke-linejoin="round" stroke-linecap="round" />
<path d="M405.8 463.8 L409.0 478.9" fill="none" stroke="#ffffff" stroke-width="3.0" stroke-linejoin="round" stroke-linecap="round" />
<path d="M369.0 520.4 L386.3 515.7 L406.8 517.4" fill="none" stroke="#ffffff" stroke-width="3.0" stroke-linejoin="round" stroke-linecap="round" />
<path d="M465.6 194.0 L470.0 207.0 L473.8 219.5 L480.0 236.0 L487.0 255.0 L490.0 264.0" fill="none" stroke="#ffffff" stroke-width="3.0" stroke-linejoin="round" stroke-linecap="round" />
<path d="M473.0 540.2 L496.3 525.9 L526.7 511.5 L533.9 507.1" fill="none" stroke="#ffffff" stroke-width="3.2" stroke-linejoin="round" stroke-linecap="round" />
<path d="M473.0 506.2 L494.5 502.6 L512.4 499.0" fill="none" stroke="#ffffff" stroke-width="3.0" stroke-linejoin="round" stroke-linecap="round" />
<path d="M478.4 465.0 L480.2 500.8" fill="none" stroke="#ffffff" stroke-width="3.0" stroke-linejoin="round" stroke-linecap="round" />
<path d="M490.9 465.0 L494.5 502.6 L496.3 525.9" fill="none" stroke="#ffffff" stroke-width="3.0" stroke-linejoin="round" stroke-linecap="round" />
<path d="M523.1 529.4 L544.6 549.1 L562.5 565.2" fill="none" stroke="#ffffff" stroke-width="3.0" stroke-linejoin="round" stroke-linecap="round" />
<path d="M516.0 540.2 L539.2 559.9 L555.3 575.1" fill="none" stroke="#ffffff" stroke-width="3.0" stroke-linejoin="round" stroke-linecap="round" />
<path d="M541.0 554.5 L557.1 540.2" fill="none" stroke="#ffffff" stroke-width="3.0" stroke-linejoin="round" stroke-linecap="round" />
<path d="M473.0 554.5 L490.9 565.2 L508.8 575.1" fill="none" stroke="#ffffff" stroke-width="3.0" stroke-linejoin="round" stroke-linecap="round" />
<path d="M567.9 542.0 L573.2 554.5 L577.0 558.1" fill="none" stroke="#ffffff" stroke-width="3.0" stroke-linejoin="round" stroke-linecap="round" />
<path d="M557.1 565.2 L577.0 575.1" fill="none" stroke="#ffffff" stroke-width="3.0" stroke-linejoin="round" stroke-linecap="round" />
<path d="M628.9 490.1 L612.8 516.9 L605.6 536.6" fill="none" stroke="#ffffff" stroke-width="3.0" stroke-linejoin="round" stroke-linecap="round" />
<path d="M603.8 536.6 L630.7 558.1 L637.9 565.2 L632.5 575.1" fill="none" stroke="#ffffff" stroke-width="3.0" stroke-linejoin="round" stroke-linecap="round" />
<path d="M603.8 536.6 L600.3 558.1 L598.5 575.1" fill="none" stroke="#ffffff" stroke-width="3.0" stroke-linejoin="round" stroke-linecap="round" />
<path d="M637.9 565.2 L659.3 549.1 L676.3 536.6" fill="none" stroke="#ffffff" stroke-width="3.0" stroke-linejoin="round" stroke-linecap="round" />
<path d="M659.3 536.6 L655.8 524.1" fill="none" stroke="#ffffff" stroke-width="3.0" stroke-linejoin="round" stroke-linecap="round" />
<path d="M676.3 497.2 L662.9 506.2" fill="none" stroke="#ffffff" stroke-width="3.0" stroke-linejoin="round" stroke-linecap="round" />
<path d="M676.3 524.1 L666.5 531.2" fill="none" stroke="#ffffff" stroke-width="3.0" stroke-linejoin="round" stroke-linecap="round" />
<path d="M587.7 372.9 L593.1 399.7 L598.5 414.1" fill="none" stroke="#ffffff" stroke-width="3.0" stroke-linejoin="round" stroke-linecap="round" />
<path d="M612.8 378.3 L621.7 408.7 L625.3 426.6" fill="none" stroke="#ffffff" stroke-width="3.0" stroke-linejoin="round" stroke-linecap="round" />
<path d="M625.3 426.6 L648.6 424.8 L657.5 414.1" fill="none" stroke="#ffffff" stroke-width="3.4" stroke-linejoin="round" stroke-linecap="round" />
<path d="M620.0 355.0 L634.3 365.7 L637.9 390.8 L630.7 414.1" fill="none" stroke="#ffffff" stroke-width="3.0" stroke-linejoin="round" stroke-linecap="round" />
<path d="M577.0 365.7 L587.7 372.9" fill="none" stroke="#ffffff" stroke-width="3.0" stroke-linejoin="round" stroke-linecap="round" />
<path d="M566 125 L499.7 245 L492 262" fill="none" stroke="#d3e3bf" stroke-width="17" stroke-linejoin="round" stroke-linecap="round" />
<path d="M566.5 125 L499.7 245 L490.4 266.5" fill="none" stroke="#f9e69d" stroke-width="12.5" stroke-linejoin="round" stroke-linecap="round" />
<path d="M566.5 125 L499.7 245 L490.4 266.5" fill="none" stroke="#cddfb6" stroke-width="4.2" stroke-linejoin="round" stroke-linecap="round" />
<path d="M490.4 266.5 L491.8 275.4 L495.4 283.5 L503.4 302.3 L512.7 319.3" fill="none" stroke="#f9e69d" stroke-width="12" stroke-linejoin="round" stroke-linecap="round" />
<path d="M490.4 266.5 L491.8 275.4 L495.4 283.5 L503.4 302.3 L512.7 319.3" fill="none" stroke="#f3ead0" stroke-width="3.2" stroke-linejoin="round" stroke-linecap="round" />
<path d="M511.5 316.6 L513.5 322.0 L513.8 350.6" fill="none" stroke="#f9e69d" stroke-width="8.2" stroke-linejoin="round" stroke-linecap="round" />
<path d="M512.4 385.4 L510.1 408.7 L505.8 455.1 L505.2 465.1 L507.9 482.9 L523.1 500.8 L532.1 508.0" fill="none" stroke="#f9e69d" stroke-width="10.5" stroke-linejoin="round" stroke-linecap="round" />
<path d="M512.4 385.4 L510.1 408.7 L505.8 455.1 L505.2 465.1 L507.9 482.9 L523.1 500.8 L532.1 508.0" fill="none" stroke="#d7e4bd" stroke-width="3" stroke-linejoin="round" stroke-linecap="round" />
<path d="M392 125 L388.7 135 L378.5 155 L371.5 176 L365.5 195 L362 205" fill="none" stroke="#f9c66e" stroke-width="8.5" stroke-linejoin="round" stroke-linecap="round" />
<path d="M365 360.2 L438 357.9 L508 354 L517 353" fill="none" stroke="#e9ad55" stroke-width="10.2" stroke-linejoin="round" stroke-linecap="round" />
<path d="M573.4 149.3 L577.0 154.7 L587.7 169.0 L603.8 190.5 L621.7 220.9 L636.1 245.1" fill="none" stroke="#e9ad55" stroke-width="8" stroke-linejoin="round" stroke-linecap="round" />
<path d="M634.3 243.2 L641.4 255.7 L652.2 270.1 L662.9 279.0" fill="none" stroke="#e9ad55" stroke-width="9" stroke-linejoin="round" stroke-linecap="round" />
<path d="M662.9 279.0 L677.2 271.8" fill="none" stroke="#e9ad55" stroke-width="8" stroke-linejoin="round" stroke-linecap="round" />
<path d="M662.9 280.8 L652.2 291.5 L643.2 305.9 L632.5 329.1 L625.3 355.1" fill="none" stroke="#e9ad55" stroke-width="6.5" stroke-linejoin="round" stroke-linecap="round" />
<path d="M625.3 355.0 L620.0 369.3 L612.8 385.4 L603.8 408.7 L602.1 426.6" fill="none" stroke="#e9ad55" stroke-width="6.5" stroke-linejoin="round" stroke-linecap="round" />
<path d="M524.9 387.2 L544.6 398 L577 414.1 L590 420 L603 424 L615 426.5" fill="none" stroke="#e9ad55" stroke-width="7.5" stroke-linejoin="round" stroke-linecap="round" />
<path d="M603 424 L615 426.5 L626.6 439.3 L633.9 458.3 L642.7 480.2 L651.5 500 L664.7 540.2 L673.7 572.4 L676 582" fill="none" stroke="#e9ad55" stroke-width="10.5" stroke-linejoin="round" stroke-linecap="round" />
<path d="M634 453 L651.5 446.6 L666 441.5 L680 435.5" fill="none" stroke="#e9ad55" stroke-width="8" stroke-linejoin="round" stroke-linecap="round" />
<path d="M632 457 L626.6 458.3 L619.3 461.2 L606.1 474.4 L600 487 L594.4 500 L591.3 524 L583.3 545.5 L580.6 578" fill="none" stroke="#e9ad55" stroke-width="7.5" stroke-linejoin="round" stroke-linecap="round" />
<path d="M604 425 L598 440 L593 455 L589 463 L574 475 L563 483 L549.5 497.7 L538 506.6" fill="none" stroke="#e9ad55" stroke-width="6" stroke-linejoin="round" stroke-linecap="round" />
<path d="M592 461 L606 472.6 L610 481" fill="none" stroke="#e9ad55" stroke-width="5.5" stroke-linejoin="round" stroke-linecap="round" />
<path d="M629 486 L640 503 L650 520 L656 536" fill="none" stroke="#ecc873" stroke-width="4.6" stroke-linejoin="round" stroke-linecap="round" />
<path d="M532.1 508.0 L524.9 518.7 L507.0 550.9 L487.3 575.1" fill="none" stroke="#e9ad55" stroke-width="4.5" stroke-linejoin="round" stroke-linecap="round" />
<path d="M515 352 L570 356 L618 362" fill="none" stroke="#e9ad55" stroke-width="6" stroke-linejoin="round" stroke-linecap="round" />
<path d="M365 360.2 L438 357.9 L508 354 L517 353" fill="none" stroke="#f9c66e" stroke-width="9.2" stroke-linejoin="round" stroke-linecap="round" />
<path d="M573.4 149.3 L577.0 154.7 L587.7 169.0 L603.8 190.5 L621.7 220.9 L636.1 245.1" fill="none" stroke="#f9c66e" stroke-width="7" stroke-linejoin="round" stroke-linecap="round" />
<path d="M634.3 243.2 L641.4 255.7 L652.2 270.1 L662.9 279.0" fill="none" stroke="#f9c66e" stroke-width="8" stroke-linejoin="round" stroke-linecap="round" />
<path d="M662.9 279.0 L677.2 271.8" fill="none" stroke="#f9c66e" stroke-width="7" stroke-linejoin="round" stroke-linecap="round" />
<path d="M662.9 280.8 L652.2 291.5 L643.2 305.9 L632.5 329.1 L625.3 355.1" fill="none" stroke="#f9c66e" stroke-width="5.5" stroke-linejoin="round" stroke-linecap="round" />
<path d="M625.3 355.0 L620.0 369.3 L612.8 385.4 L603.8 408.7 L602.1 426.6" fill="none" stroke="#f9c66e" stroke-width="5.5" stroke-linejoin="round" stroke-linecap="round" />
<path d="M524.9 387.2 L544.6 398 L577 414.1 L590 420 L603 424 L615 426.5" fill="none" stroke="#f9c66e" stroke-width="6.5" stroke-linejoin="round" stroke-linecap="round" />
<path d="M603 424 L615 426.5 L626.6 439.3 L633.9 458.3 L642.7 480.2 L651.5 500 L664.7 540.2 L673.7 572.4 L676 582" fill="none" stroke="#f9c66e" stroke-width="9.5" stroke-linejoin="round" stroke-linecap="round" />
<path d="M634 453 L651.5 446.6 L666 441.5 L680 435.5" fill="none" stroke="#f9c66e" stroke-width="7" stroke-linejoin="round" stroke-linecap="round" />
<path d="M632 457 L626.6 458.3 L619.3 461.2 L606.1 474.4 L600 487 L594.4 500 L591.3 524 L583.3 545.5 L580.6 578" fill="none" stroke="#f9c66e" stroke-width="6.5" stroke-linejoin="round" stroke-linecap="round" />
<path d="M604 425 L598 440 L593 455 L589 463 L574 475 L563 483 L549.5 497.7 L538 506.6" fill="none" stroke="#f9c66e" stroke-width="5" stroke-linejoin="round" stroke-linecap="round" />
<path d="M592 461 L606 472.6 L610 481" fill="none" stroke="#f9c66e" stroke-width="4.5" stroke-linejoin="round" stroke-linecap="round" />
<path d="M629 486 L640 503 L650 520 L656 536" fill="none" stroke="#fbdc8a" stroke-width="3.6" stroke-linejoin="round" stroke-linecap="round" />
<path d="M532.1 508.0 L524.9 518.7 L507.0 550.9 L487.3 575.1" fill="none" stroke="#f9c66e" stroke-width="3.5" stroke-linejoin="round" stroke-linecap="round" />
<path d="M515 352 L570 356 L618 362" fill="none" stroke="#f9c66e" stroke-width="5" stroke-linejoin="round" stroke-linecap="round" />
<path d="M369.0 190.5 L404.8 176.2 L440.6 154.7 L473.0 139.5" fill="none" stroke="rgba(175,110,185,.5)" stroke-width="3.2" stroke-linejoin="round" stroke-linecap="round" />
<path d="M473.0 139.5 L483.7 135.0" fill="none" stroke="rgba(175,110,185,.5)" stroke-width="3.2" stroke-linejoin="round" stroke-linecap="round" />
<path d="M648.6 135.0 L661.1 138.6 L676.3 143.1" fill="none" stroke="rgba(175,110,185,.5)" stroke-width="3.2" stroke-linejoin="round" stroke-linecap="round" />
<path d="M569.8 138.6 L577.0 144.8 L676.3 229.9" fill="none" stroke="rgba(95,190,95,.55)" stroke-width="3.5" stroke-linejoin="round" stroke-linecap="round" />
<path d="M573.2 135.0 L570.5 154.7 L544.6 231.7 L544.6 245.1" fill="none" stroke="rgba(130,130,125,.33)" stroke-width="3" stroke-linejoin="round" stroke-linecap="round" />
<path d="M544.6 245.0 L544.6 271.8 L550.0 304.1 L566.1 355.1" fill="none" stroke="rgba(130,130,125,.33)" stroke-width="3" stroke-linejoin="round" stroke-linecap="round" />
<path d="M566.3 350.5 L594.9 378.3 L610.1 390.8 L630.7 414.1 L657.5 448.1" fill="none" stroke="rgba(130,130,125,.3)" stroke-width="3" stroke-linejoin="round" stroke-linecap="round" />
<path d="M369 404 L473 378 L523 368 L604 370" fill="none" stroke="rgba(140,190,230,.55)" stroke-width="3.8" stroke-linejoin="round" stroke-linecap="round" />
<path d="M369 438 L473 390 L540 366 L577 348.8 L677 307.2" fill="none" stroke="rgba(100,112,180,.5)" stroke-width="4" stroke-linejoin="round" stroke-linecap="round" />
<path d="M677 277 L663 292 L645 320 L630.7 355 L621 375 L610 391 L595 417 L570 455 L543.7 500.8 L527 536 L510 575" fill="none" stroke="rgba(235,70,70,.4)" stroke-width="3.2" stroke-linejoin="round" stroke-linecap="round" />
<text transform="translate(378.0 179.0) rotate(-62.0)" font-family="DejaVu Sans Condensed, DejaVu Sans, Liberation Sans, sans-serif" font-size="12.5" fill="#222" font-weight="normal" text-anchor="start" opacity="1" textLength="55.5" lengthAdjust="spacingAndGlyphs" stroke="#f8f1da" stroke-opacity=".8" stroke-width="2" paint-order="stroke" stroke-linejoin="round" >Садовое</text>
<text transform="translate(402.5 185.5) rotate(50.9)" font-family="DejaVu Sans, Liberation Sans, sans-serif" font-size="9" fill="#333" font-weight="normal" text-anchor="start" opacity="1" textLength="76.1" lengthAdjust="spacingAndGlyphs" stroke="#f8f1da" stroke-opacity=".8" stroke-width="2" paint-order="stroke" stroke-linejoin="round" >ул. Спиридоновка</text>
<text transform="translate(491.5 210.5) rotate(-51.6)" font-family="DejaVu Sans, Liberation Sans, sans-serif" font-size="9" fill="#333" font-weight="normal" text-anchor="start" opacity="1" textLength="89.3" lengthAdjust="spacingAndGlyphs" stroke="#f8f1da" stroke-opacity=".8" stroke-width="2" paint-order="stroke" stroke-linejoin="round" >Большая Бронная ул.</text>
<text transform="translate(505.5 250.0) rotate(-57.2)" font-family="DejaVu Sans Condensed, DejaVu Sans, Liberation Sans, sans-serif" font-size="12.5" fill="#222" font-weight="normal" text-anchor="start" opacity="1" textLength="90.4" lengthAdjust="spacingAndGlyphs" stroke="#f8f1da" stroke-opacity=".8" stroke-width="2" paint-order="stroke" stroke-linejoin="round" >Тверской бульв.</text>
<text transform="translate(584.5 173.2) rotate(58.0)" font-family="DejaVu Sans Condensed, DejaVu Sans, Liberation Sans, sans-serif" font-size="12.5" fill="#222" font-weight="normal" text-anchor="start" opacity="1" textLength="82.0" lengthAdjust="spacingAndGlyphs" stroke="#f8f1da" stroke-opacity=".8" stroke-width="2" paint-order="stroke" stroke-linejoin="round" >Тверская ул.</text>
<text transform="translate(619.5 138.5) rotate(60.5)" font-family="DejaVu Sans, Liberation Sans, sans-serif" font-size="9" fill="#333" font-weight="normal" text-anchor="start" opacity="1" textLength="104.6" lengthAdjust="spacingAndGlyphs" stroke="#f8f1da" stroke-opacity=".8" stroke-width="2" paint-order="stroke" stroke-linejoin="round" >ул. Большая Дмитровка</text>
<text transform="translate(573.0 255.5) rotate(-38.1)" font-family="DejaVu Sans, Liberation Sans, sans-serif" font-size="8.5" fill="#333" font-weight="normal" text-anchor="start" opacity="1" textLength="52.7" lengthAdjust="spacingAndGlyphs" stroke="#f8f1da" stroke-opacity=".8" stroke-width="2" paint-order="stroke" stroke-linejoin="round" >Брюсов пер.</text>
<text transform="translate(368.0 244.0) rotate(13.1)" font-family="DejaVu Sans, Liberation Sans, sans-serif" font-size="9" fill="#333" font-weight="normal" text-anchor="start" opacity="1" textLength="86.2" lengthAdjust="spacingAndGlyphs" stroke="#f8f1da" stroke-opacity=".8" stroke-width="2" paint-order="stroke" stroke-linejoin="round" >Малая Никитская ул.</text>
<text transform="translate(415.0 286.5) rotate(21.9)" font-family="DejaVu Sans, Liberation Sans, sans-serif" font-size="9" fill="#333" font-weight="normal" text-anchor="start" opacity="1" textLength="71.1" lengthAdjust="spacingAndGlyphs" stroke="#f8f1da" stroke-opacity=".8" stroke-width="2" paint-order="stroke" stroke-linejoin="round" >Скатертный пер.</text>
<text transform="translate(406.5 294.0) rotate(23.4)" font-family="DejaVu Sans, Liberation Sans, sans-serif" font-size="9" fill="#333" font-weight="normal" text-anchor="start" opacity="1" textLength="60.5" lengthAdjust="spacingAndGlyphs" stroke="#f8f1da" stroke-opacity=".8" stroke-width="2" paint-order="stroke" stroke-linejoin="round" >Хлебный пер.</text>
<text transform="translate(448.5 407.5) rotate(-33.1)" font-family="DejaVu Sans, Liberation Sans, sans-serif" font-size="8.5" fill="#333" font-weight="normal" text-anchor="start" opacity="1" textLength="37.6" lengthAdjust="spacingAndGlyphs" stroke="#f8f1da" stroke-opacity=".8" stroke-width="2" paint-order="stroke" stroke-linejoin="round" >ул. Арбат</text>
<text transform="translate(370.0 451.0) rotate(-33.1)" font-family="DejaVu Sans, Liberation Sans, sans-serif" font-size="8.5" fill="#333" font-weight="normal" text-anchor="start" opacity="1" textLength="37.6" lengthAdjust="spacingAndGlyphs" stroke="#f8f1da" stroke-opacity=".8" stroke-width="2" paint-order="stroke" stroke-linejoin="round" >ул. Арбат</text>
<text transform="translate(413.8 585.9) rotate(-32.4)" font-family="DejaVu Sans, Liberation Sans, sans-serif" font-size="10" fill="#222" font-weight="normal" text-anchor="start" opacity="1" textLength="61.9" lengthAdjust="spacingAndGlyphs" stroke="#f8f1da" stroke-opacity=".8" stroke-width="2" paint-order="stroke" stroke-linejoin="round" >Пречистенка</text>
<text transform="translate(468.3 602.2) rotate(-47.5)" font-family="DejaVu Sans Condensed, DejaVu Sans, Liberation Sans, sans-serif" font-size="11.5" fill="#222" font-weight="normal" text-anchor="start" opacity="1" textLength="61.4" lengthAdjust="spacingAndGlyphs" stroke="#f8f1da" stroke-opacity=".8" stroke-width="2" paint-order="stroke" stroke-linejoin="round" >Остоженка</text>
<text transform="translate(381.7 361.0) rotate(0.0)" font-family="DejaVu Sans, Liberation Sans, sans-serif" font-size="13" fill="#8a8a8a" font-weight="bold" text-anchor="start" opacity="0.7" textLength="41.6" lengthAdjust="spacingAndGlyphs" >Арбат</text>
<text transform="translate(547.6 155.8) rotate(0.0)" font-family="DejaVu Sans, Liberation Sans, sans-serif" font-size="10" fill="#222" font-weight="normal" text-anchor="start" opacity="1" textLength="43.4" lengthAdjust="spacingAndGlyphs" stroke="#f8f1da" stroke-opacity=".8" stroke-width="2" paint-order="stroke" stroke-linejoin="round" >Тверская</text>
<text transform="translate(660.0 260.8) rotate(0.0)" font-family="DejaVu Sans, Liberation Sans, sans-serif" font-size="10" fill="#222" font-weight="normal" text-anchor="start" opacity="1" textLength="66.0" lengthAdjust="spacingAndGlyphs" stroke="#f8f1da" stroke-opacity=".8" stroke-width="2" paint-order="stroke" stroke-linejoin="round" >Театральная</text>
<text transform="translate(635.0 303.4) rotate(0.0)" font-family="DejaVu Sans, Liberation Sans, sans-serif" font-size="10" fill="#222" font-weight="normal" text-anchor="start" opacity="1" textLength="68.0" lengthAdjust="spacingAndGlyphs" stroke="#f8f1da" stroke-opacity=".8" stroke-width="2" paint-order="stroke" stroke-linejoin="round" >Охотный ряд</text>
<text transform="translate(517.0 358.0) rotate(0.0)" font-family="DejaVu Sans, Liberation Sans, sans-serif" font-size="10" fill="#222" font-weight="normal" text-anchor="start" opacity="1" textLength="50.0" lengthAdjust="spacingAndGlyphs" stroke="#f8f1da" stroke-opacity=".8" stroke-width="2" paint-order="stroke" stroke-linejoin="round" >Арбатская</text>
<text transform="translate(497.7 386.5) rotate(0.0)" font-family="DejaVu Sans, Liberation Sans, sans-serif" font-size="10" fill="#222" font-weight="normal" text-anchor="start" opacity="1" textLength="49.3" lengthAdjust="spacingAndGlyphs" stroke="#f8f1da" stroke-opacity=".8" stroke-width="2" paint-order="stroke" stroke-linejoin="round" >Арбатская</text>
<text transform="translate(614.1 362.5) rotate(0.0)" font-family="DejaVu Sans, Liberation Sans, sans-serif" font-size="10" fill="#222" font-weight="normal" text-anchor="start" opacity="1" textLength="108.0" lengthAdjust="spacingAndGlyphs" stroke="#f8f1da" stroke-opacity=".8" stroke-width="2" paint-order="stroke" stroke-linejoin="round" >Александровский сад</text>
<text transform="translate(617.9 389.0) rotate(0.0)" font-family="DejaVu Sans, Liberation Sans, sans-serif" font-size="10" fill="#222" font-weight="normal" text-anchor="start" opacity="1" textLength="58.4" lengthAdjust="spacingAndGlyphs" stroke="#f8f1da" stroke-opacity=".8" stroke-width="2" paint-order="stroke" stroke-linejoin="round" >Боровицкая</text>
<text transform="translate(580.7 407.2) rotate(0.0)" font-family="DejaVu Sans, Liberation Sans, sans-serif" font-size="10" fill="#222" font-weight="normal" text-anchor="start" opacity="1" textLength="59.0" lengthAdjust="spacingAndGlyphs" stroke="#f8f1da" stroke-opacity=".8" stroke-width="2" paint-order="stroke" stroke-linejoin="round" >Библиотека</text>
<text transform="translate(581.5 416.8) rotate(0.0)" font-family="DejaVu Sans, Liberation Sans, sans-serif" font-size="10" fill="#222" font-weight="normal" text-anchor="start" opacity="1" textLength="56.5" lengthAdjust="spacingAndGlyphs" stroke="#f8f1da" stroke-opacity=".8" stroke-width="2" paint-order="stroke" stroke-linejoin="round" >им. Ленина</text>
<text transform="translate(463.2 513.7) rotate(0.0)" font-family="DejaVu Sans, Liberation Sans, sans-serif" font-size="10" fill="#222" font-weight="normal" text-anchor="start" opacity="1" textLength="74.3" lengthAdjust="spacingAndGlyphs" stroke="#f8f1da" stroke-opacity=".8" stroke-width="2" paint-order="stroke" stroke-linejoin="round" >Кропоткинская</text>
<text transform="translate(659.4 399.6) rotate(0.0)" font-family="DejaVu Sans, Liberation Sans, sans-serif" font-size="10" fill="#888" font-weight="normal" text-anchor="start" opacity="1" textLength="40.0" lengthAdjust="spacingAndGlyphs" stroke="#f8f1da" stroke-opacity=".8" stroke-width="2" paint-order="stroke" stroke-linejoin="round" >Москва</text>
<text transform="translate(619.0 344.0) rotate(0.0)" font-family="DejaVu Sans, Liberation Sans, sans-serif" font-size="9.5" fill="#3f7f5a" font-weight="normal" text-anchor="start" opacity="1" textLength="86.0" lengthAdjust="spacingAndGlyphs" stroke="#f8f1da" stroke-opacity=".8" stroke-width="2" paint-order="stroke" stroke-linejoin="round" font-style="italic">Александровский</text>
<text transform="translate(650.3 353.4) rotate(0.0)" font-family="DejaVu Sans, Liberation Sans, sans-serif" font-size="9.5" fill="#3f7f5a" font-weight="normal" text-anchor="start" opacity="1" textLength="16.0" lengthAdjust="spacingAndGlyphs" stroke="#f8f1da" stroke-opacity=".8" stroke-width="2" paint-order="stroke" stroke-linejoin="round" font-style="italic">сад</text>
<text transform="translate(540.0 477.7) rotate(0.0)" font-family="DejaVu Sans, Liberation Sans, sans-serif" font-size="9.5" fill="#777" font-weight="normal" text-anchor="start" opacity="1" textLength="39.8" lengthAdjust="spacingAndGlyphs" stroke="#f8f1da" stroke-opacity=".8" stroke-width="2" paint-order="stroke" stroke-linejoin="round" >ГМИИ им.</text>
<text transform="translate(530.3 487.8) rotate(0.0)" font-family="DejaVu Sans, Liberation Sans, sans-serif" font-size="9.5" fill="#777" font-weight="normal" text-anchor="start" opacity="1" textLength="62.4" lengthAdjust="spacingAndGlyphs" stroke="#f8f1da" stroke-opacity=".8" stroke-width="2" paint-order="stroke" stroke-linejoin="round" >А.С. Пушкина</text>
<text transform="translate(507.3 525.7) rotate(0.0)" font-family="DejaVu Sans, Liberation Sans, sans-serif" font-size="9.5" fill="#777" font-weight="normal" text-anchor="start" opacity="1" textLength="110.4" lengthAdjust="spacingAndGlyphs" stroke="#f8f1da" stroke-opacity=".8" stroke-width="2" paint-order="stroke" stroke-linejoin="round" >Храм Христа Спасителя</text>
<text transform="translate(633.5 508.0) rotate(0.0)" font-family="DejaVu Sans, Liberation Sans, sans-serif" font-size="8.5" fill="#222" font-weight="normal" text-anchor="start" opacity="1" textLength="37.5" lengthAdjust="spacingAndGlyphs" stroke="#f8f1da" stroke-opacity=".8" stroke-width="2" paint-order="stroke" stroke-linejoin="round" font-style="italic">о. Балчуг</text>
<text transform="translate(672.0 527.0) rotate(0.0)" font-family="DejaVu Sans, Liberation Sans, sans-serif" font-size="9" fill="#3a78b8" font-weight="normal" text-anchor="start" opacity="1" font-style="italic">Р</text>
<circle cx="563.8" cy="507.5" r="8" fill="#fff6e4" opacity=".9"/>
<path d="M563.8 501 V514.5 M559.3 505.3 H568.3" stroke="#7a4a42" stroke-width="1.4" fill="none"/>
<circle cx="569.7" cy="141.1" r="5.8" fill="#fff" stroke="#4f80c2" stroke-width="1.1"/>
<path d="M565.1 143.4 L567.1 137.8 L568.5 137.8 L569.7 141.1 L570.9 137.8 L572.3 137.8 L574.3 143.4 L571.7 143.4 L571.15 140.6 L569.7 143.3 L568.25 140.6 L567.7 143.4 Z" fill="#f5161c"/>
<circle cx="667.4" cy="288" r="5.8" fill="#fff" stroke="#4f80c2" stroke-width="1.1"/>
<path d="M662.8 290.3 L664.8 284.7 L666.2 284.7 L667.4 288.0 L668.6 284.7 L670.0 284.7 L672.0 290.3 L669.4 290.3 L668.85 287.5 L667.4 290.2 L665.95 287.5 L665.4 290.3 Z" fill="#f5161c"/>
<circle cx="522.9" cy="370.9" r="5.8" fill="#fff" stroke="#4f80c2" stroke-width="1.1"/>
<path d="M518.3 373.2 L520.3 367.6 L521.7 367.6 L522.9 370.9 L524.1 367.6 L525.5 367.6 L527.5 373.2 L524.9 373.2 L524.35 370.4 L522.9 373.1 L521.45 370.4 L520.9 373.2 Z" fill="#f5161c"/>
<circle cx="541.8" cy="366.4" r="5.8" fill="#fff" stroke="#4f80c2" stroke-width="1.1"/>
<path d="M537.2 368.7 L539.2 363.1 L540.6 363.1 L541.8 366.4 L543.0 363.1 L544.4 363.1 L546.4 368.7 L543.8 368.7 L543.25 365.9 L541.8 368.6 L540.35 365.9 L539.8 368.7 Z" fill="#f5161c"/>
<circle cx="604.7" cy="370.9" r="5.8" fill="#fff" stroke="#4f80c2" stroke-width="1.1"/>
<path d="M600.1 373.2 L602.1 367.6 L603.5 367.6 L604.7 370.9 L605.9 367.6 L607.3 367.6 L609.3 373.2 L606.7 373.2 L606.15 370.4 L604.7 373.1 L603.25 370.4 L602.7 373.2 Z" fill="#f5161c"/>
<circle cx="610" cy="391.5" r="5.8" fill="#fff" stroke="#4f80c2" stroke-width="1.1"/>
<path d="M605.4 393.8 L607.4 388.2 L608.8 388.2 L610 391.5 L611.2 388.2 L612.6 388.2 L614.6 393.8 L612.0 393.8 L611.45 391.0 L610 393.7 L608.55 391.0 L608.0 393.8 Z" fill="#f5161c"/>
<circle cx="543.7" cy="501.4" r="5.8" fill="#fff" stroke="#4f80c2" stroke-width="1.1"/>
<path d="M539.1 503.7 L541.1 498.1 L542.5 498.1 L543.7 501.4 L544.9 498.1 L546.3 498.1 L548.3 503.7 L545.7 503.7 L545.15 500.9 L543.7 503.6 L542.25 500.9 L541.7 503.7 Z" fill="#f5161c"/>
<circle cx="462.3" cy="247.5" r="83.4" fill="rgba(237,72,67,.36)" stroke="#ea4a4c" stroke-width="1"/>
<circle cx="583.6" cy="454.7" r="83.4" fill="rgba(237,72,67,.36)" stroke="#ea4a4c" stroke-width="1"/>
<circle cx="482" cy="527.6" r="83.4" fill="rgba(237,72,67,.36)" stroke="#ea4a4c" stroke-width="1"/>
<circle cx="462" cy="247" r="8.2" fill="#fff"/><circle cx="462" cy="247" r="5.7" fill="#e8393d"/>
<circle cx="584" cy="455" r="8.2" fill="#fff"/><circle cx="584" cy="455" r="5.7" fill="#e8393d"/>
<circle cx="482" cy="527.6" r="8.2" fill="#fff"/><circle cx="482" cy="527.6" r="5.7" fill="#e8393d"/>
<circle cx="558" cy="456" r="8.2" fill="#fff"/><circle cx="558" cy="456" r="5.7" fill="#2593f2"/>
<circle cx="561.6" cy="471.3" r="8.2" fill="#fff"/><circle cx="561.6" cy="471.3" r="5.7" fill="#2593f2"/>
<defs><linearGradient id="zg" x1="0" y1="0" x2="0" y2="1"><stop offset="0" stop-color="#ffffff"/><stop offset="1" stop-color="#e4e4e4"/></linearGradient></defs>
<rect x="397" y="343" width="5" height="138" fill="rgba(170,165,150,.55)" stroke="rgba(110,105,95,.6)" stroke-width=".8"/>
<rect x="387.5" y="319.5" width="24" height="24" rx="2.5" fill="url(#zg)" stroke="#8f8a7e" stroke-width="1"/>
<rect x="387.5" y="480.5" width="24" height="24" rx="2.5" fill="url(#zg)" stroke="#8f8a7e" stroke-width="1"/>
<rect x="387.5" y="378" width="24" height="11" rx="2.5" fill="url(#zg)" stroke="#8f8a7e" stroke-width="1"/>
<path d="M393.5 331.5 H405.5 M399.5 325.5 V337.5" stroke="#4d4d4d" stroke-width="3" fill="none"/>
<path d="M393.5 492.5 H405.5" stroke="#4d4d4d" stroke-width="3" fill="none"/>
<path d="M396 382.5 H403.5 M396 384.5 H403.5" stroke="#999" stroke-width="1" stroke-dasharray="1 1" fill="none"/>
</svg>
<!--/MAP-->
</div>

<div class="btn ok"></div>
<div class="t" id="okt" style="left:18.75px;top:590px">Создать сегмент</div>
<div class="btn cancel"></div>
<div class="t" id="cat" style="left:142.5px;top:590px">Отмена</div>
</body>
</html>
